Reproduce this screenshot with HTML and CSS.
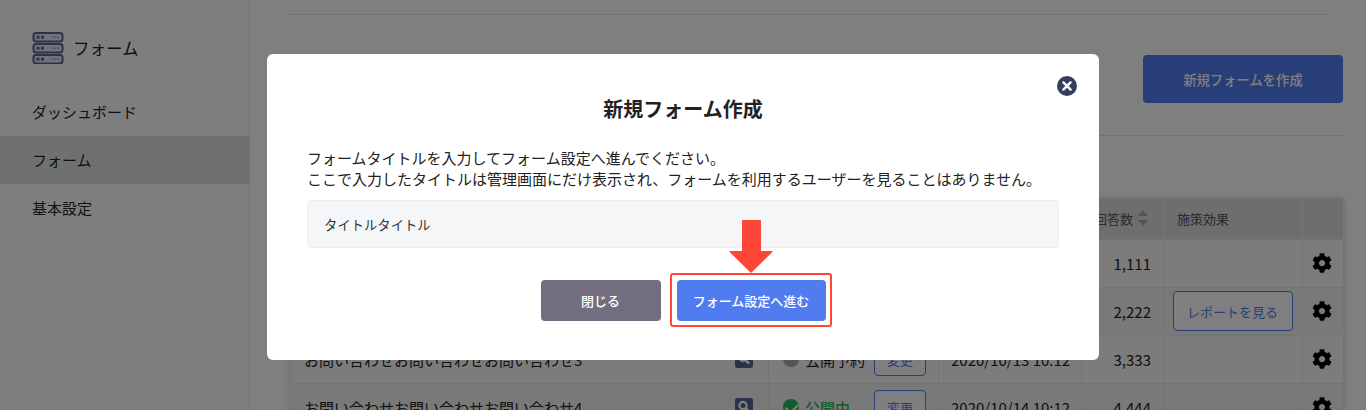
FILE: index.html
```html
<!DOCTYPE html>
<html lang="ja">
<head>
  <meta charset="UTF-8">
  <title>フォーム</title>
  <link rel="stylesheet" href="styles.css">
</head>
<body>
  <svg class="icon-defs" width="0" height="0">
    <symbol id="gear" viewBox="0 0 512 512"><path d="M487.4 315.7l-42.6-24.6c4.3-23.2 4.3-47 0-70.2l42.6-24.6c4.9-2.8 7.1-8.6 5.5-14-11.1-35.6-30-67.8-54.7-94.6-3.8-4.1-10-5.1-14.8-2.3L380.8 110c-17.9-15.4-38.5-27.3-60.8-35.1V25.8c0-5.6-3.9-10.5-9.4-11.7-36.7-8.2-74.3-7.8-109.2 0-5.5 1.2-9.4 6.1-9.4 11.7V75c-22.2 7.9-42.8 19.8-60.8 35.1L88.7 85.5c-4.9-2.8-11-1.9-14.8 2.3-24.7 26.7-43.6 58.9-54.7 94.6-1.7 5.4.6 11.2 5.5 14L67.3 221c-4.3 23.2-4.3 47 0 70.2l-42.6 24.6c-4.9 2.8-7.1 8.6-5.5 14 11.1 35.6 30 67.8 54.7 94.6 3.8 4.1 10 5.1 14.8 2.3l42.6-24.6c17.9 15.4 38.5 27.3 60.8 35.1v49.2c0 5.6 3.9 10.5 9.4 11.7 36.7 8.2 74.3 7.8 109.2 0 5.5-1.2 9.4-6.1 9.4-11.7v-49.2c22.2-7.9 42.8-19.8 60.8-35.1l42.6 24.6c4.9 2.8 11 1.9 14.8-2.3 24.7-26.7 43.6-58.9 54.7-94.6 1.5-5.5-.7-11.3-5.6-14.1zM256 336c-44.1 0-80-35.9-80-80s35.9-80 80-80 80 35.9 80 80-35.9 80-80 80z"/></symbol>
    <symbol id="search" viewBox="0 0 18 18"><rect width="18" height="18" rx="2" fill="#566695"/><circle cx="8" cy="7.5" r="3.6" fill="none" stroke="#fff" stroke-width="2.2"/><path d="M10.8 10.3l3.4 3.4" stroke="#fff" stroke-width="2.4"/></symbol>
  </svg>

  <div class="app">
    <aside class="sidebar">
      <div class="brand">
        <svg class="brand-icon" width="32" height="32" viewBox="0 0 32 32">
          <g fill="#e4e7ee" stroke="#566695" stroke-width="2">
            <rect x="1.5" y="1" width="29" height="8.4" rx="2.4"/>
            <rect x="1.5" y="12" width="29" height="8.4" rx="2.4"/>
            <rect x="1.5" y="23" width="29" height="8.4" rx="2.4"/>
          </g>
          <g fill="#566695">
            <rect x="4.5" y="3.7" width="3" height="3"/><rect x="9" y="3.7" width="3" height="3"/>
            <rect x="4.5" y="14.7" width="3" height="3"/><rect x="9" y="14.7" width="3" height="3"/>
            <rect x="4.5" y="25.7" width="3" height="3"/><rect x="9" y="25.7" width="3" height="3"/>
          </g>
          <g fill="#7f9cf0">
            <rect x="19" y="4.4" width="1.6" height="1.6"/><rect x="22" y="4.4" width="1.6" height="1.6"/><rect x="25" y="4.4" width="1.6" height="1.6"/>
            <rect x="19" y="15.4" width="1.6" height="1.6"/><rect x="22" y="15.4" width="1.6" height="1.6"/><rect x="25" y="15.4" width="1.6" height="1.6"/>
            <rect x="19" y="26.4" width="1.6" height="1.6"/><rect x="22" y="26.4" width="1.6" height="1.6"/><rect x="25" y="26.4" width="1.6" height="1.6"/>
          </g>
        </svg>
        <span>フォーム</span>
      </div>
      <nav class="side-nav">
        <a class="side-link">ダッシュボード</a>
        <a class="side-link active">フォーム</a>
        <a class="side-link">基本設定</a>
      </nav>
    </aside>

    <main class="content">
      <div class="top-rule"></div>
      <div class="page-head">
        <button class="create-btn">新規フォームを作成</button>
      </div>

      <table class="form-table">
        <colgroup>
          <col class="col-title"><col class="col-status"><col class="col-date">
          <col class="col-count"><col class="col-effect"><col class="col-gear">
        </colgroup>
        <thead>
          <tr>
            <th>タイトル</th><th>ステータス</th><th>更新日時</th>
            <th>
              <div class="sort-head">回答数
                <svg class="sort" width="10" height="16" viewBox="0 0 10 16"><path d="M5 0l5 6H0zM5 16L0 10h10z"/></svg>
              </div>
            </th>
            <th>施策効果</th><th></th>
          </tr>
        </thead>
        <tbody>
          <tr>
            <td><div class="title-cell">お問い合わせお問い合わせお問い合わせ1<svg class="search" width="18" height="18"><use href="#search"/></svg></div></td>
            <td><div class="status-cell"><span class="state on"><i class="dot on"></i>公開中</span><button class="change-btn">変更</button></div></td>
            <td class="date">2020/10/11 10:12</td><td class="num">1,111</td><td></td>
            <td class="gear-cell"><svg class="gear" width="20" height="20"><use href="#gear"/></svg></td>
          </tr>
          <tr>
            <td><div class="title-cell">お問い合わせお問い合わせお問い合わせ2<svg class="search" width="18" height="18"><use href="#search"/></svg></div></td>
            <td><div class="status-cell"><span class="state on"><i class="dot on"></i>公開中</span><button class="change-btn">変更</button></div></td>
            <td class="date">2020/10/12 10:12</td><td class="num">2,222</td>
            <td class="effect-cell"><button class="report-btn">レポートを見る</button></td>
            <td class="gear-cell"><svg class="gear" width="20" height="20"><use href="#gear"/></svg></td>
          </tr>
          <tr>
            <td><div class="title-cell">お問い合わせお問い合わせお問い合わせ3<svg class="search" width="18" height="18"><use href="#search"/></svg></div></td>
            <td><div class="status-cell"><span class="state"><i class="dot"></i>公開予約</span><button class="change-btn">変更</button></div></td>
            <td class="date">2020/10/13 10:12</td><td class="num">3,333</td><td></td>
            <td class="gear-cell"><svg class="gear" width="20" height="20"><use href="#gear"/></svg></td>
          </tr>
          <tr>
            <td><div class="title-cell">お問い合わせお問い合わせお問い合わせ4<svg class="search" width="18" height="18"><use href="#search"/></svg></div></td>
            <td><div class="status-cell"><span class="state on"><i class="dot on"></i>公開中</span><button class="change-btn">変更</button></div></td>
            <td class="date">2020/10/14 10:12</td><td class="num">4,444</td><td></td>
            <td class="gear-cell"><svg class="gear" width="20" height="20"><use href="#gear"/></svg></td>
          </tr>
        </tbody>
      </table>
    </main>
  </div>

  <!-- modal -->
  <div class="overlay">
    <div class="modal">
      <button class="modal-close" aria-label="閉じる">
        <svg width="20" height="20" viewBox="0 0 20 20">
          <circle cx="10" cy="10" r="10" fill="#343f5c"/>
          <path d="M6.4 6.4l7.2 7.2M13.6 6.4l-7.2 7.2" stroke="#fff" stroke-width="2.4" stroke-linecap="round"/>
        </svg>
      </button>
      <h2 class="modal-title">新規フォーム作成</h2>
      <p class="modal-text">フォームタイトルを入力してフォーム設定へ進んでください。<br>ここで入力したタイトルは管理画面にだけ表示され、フォームを利用するユーザーを見ることはありません。</p>
      <div class="modal-input">タイトルタイトル</div>
      <div class="modal-actions">
        <button class="btn btn-close">閉じる</button>
        <div class="next-wrap">
          <button class="btn btn-next">フォーム設定へ進む</button>
          <span class="next-frame"></span>
          <svg class="next-arrow" width="44" height="53" viewBox="0 0 44 53">
            <path d="M13 1a1 1 0 0 1 1-1h17a1 1 0 0 1 1 1v30h11a.6.6 0 0 1 .4 1L22 53 .6 32a.6.6 0 0 1 .4-1h12z" fill="#ff4438"/>
          </svg>
        </div>
      </div>
    </div>
  </div>
</body>
</html>
```

FILE: styles.css
```css
* {
  margin: 0;
  padding: 0;
  box-sizing: border-box;
}

html, body {
  height: 100%;
  overflow: hidden;
  background: #fff;
  color: #222;
  font-family: "Noto Sans CJK JP", "Noto Sans", sans-serif;
  font-size: 15px;
}

button {
  font-family: inherit;
  border: none;
  background: none;
}

.icon-defs {
  position: absolute;
}

.app {
  display: flex;
  height: 100%;
}

/* sidebar */
.sidebar {
  width: 250px;
  flex: none;
  background: #fdfdfd;
  border-right: 1px solid #e2e2e2;
}

.brand {
  display: flex;
  align-items: center;
  gap: 9px;
  height: 88px;
  padding: 7px 0 0 32px;
  font-size: 16.5px;
}

.side-link {
  display: block;
  height: 48px;
  padding-left: 32px;
  line-height: 48px;
}

.side-link.active {
  background: #dfe2e1;
}

/* main area */
.content {
  flex: 1;
  min-width: 0;
  padding: 0 23px 0 40px;
}

.top-rule {
  height: 15px;
  margin-right: 17px;
  border-bottom: 1px solid #e2e2e2;
}

.page-head {
  display: flex;
  justify-content: flex-end;
  margin-top: 40px;
  padding-bottom: 32px;
  border-bottom: 1px solid #e2e2e2;
}

.create-btn {
  width: 200px;
  height: 48px;
  border-radius: 4px;
  background: #507cf0;
  color: #fff;
  font-size: 13.33px;
  font-weight: 500;
}

.form-table {
  width: 100%;
  margin-top: 62px;
  table-layout: fixed;
  border-collapse: collapse;
  box-shadow: 0 0 6px rgba(0, 0, 0, .15);
}

.col-title { width: 478px; }
.col-status { width: 170px; }
.col-date { width: 143px; }
.col-count { width: 83px; }
.col-effect { width: 138px; }
.col-gear { width: 41px; }

.form-table th {
  height: 41px;
  padding: 0 12px;
  background: #dcdcdc;
  border-right: 1px solid #efefef;
  color: #555;
  font-size: 13px;
  font-weight: 400;
  text-align: left;
}

.form-table td {
  height: 48px;
  border: 1px solid #e8e8e8;
}

.form-table tbody tr:nth-child(odd) td {
  background: #f8f8f8;
}

.form-table tbody tr:nth-child(even) td {
  background: #f2f2f2;
}

.sort-head {
  display: flex;
  align-items: center;
  gap: 5px;
  white-space: nowrap;
}

.sort {
  flex: none;
  fill: #a8a8a8;
}

.title-cell {
  display: flex;
  align-items: center;
  justify-content: space-between;
  padding: 0 15px 0 13px;
}

.search {
  flex: none;
}

.status-cell {
  display: flex;
  align-items: center;
  justify-content: space-between;
  padding: 0 12px 0 14px;
}

.state {
  display: flex;
  align-items: center;
  gap: 6px;
}

.state.on {
  color: #2fb457;
  font-weight: 500;
}

.dot {
  position: relative;
  flex: none;
  width: 16px;
  height: 16px;
  border-radius: 50%;
  background: #aaa;
}

.dot.on {
  background: #2fb457;
}

.dot.on::after {
  content: "";
  position: absolute;
  left: 5px;
  top: 2px;
  width: 6px;
  height: 10px;
  border: solid #fff;
  border-width: 0 2px 2px 0;
  transform: rotate(45deg);
}

.change-btn {
  width: 52px;
  height: 34px;
  border: 1px solid #507cf0;
  border-radius: 4px;
  background: #fff;
  color: #507cf0;
  font-size: 13px;
}

.date {
  padding-left: 12px;
  white-space: nowrap;
}

.num {
  padding-right: 13px;
  text-align: right;
}

.effect-cell {
  padding-right: 2px;
  text-align: center;
}

.report-btn {
  width: 120px;
  height: 40px;
  border: 1px solid #507cf0;
  border-radius: 4px;
  background: #fff;
  color: #507cf0;
  font-size: 13px;
}

.gear-cell {
  padding-right: 3px;
  text-align: center;
  line-height: 0;
}

.gear {
  fill: #000;
}

/* modal */
.overlay {
  position: fixed;
  inset: 0;
  display: flex;
  justify-content: center;
  align-items: flex-start;
  padding-top: 54px;
  background: rgba(0, 0, 0, .5);
}

.modal {
  position: relative;
  width: 832px;
  height: 306px;
  padding: 41px 40px 0;
  border-radius: 6px;
  background: #fff;
}

.modal-close {
  position: absolute;
  top: 22px;
  right: 22px;
  width: 20px;
  height: 20px;
  line-height: 0;
}

.modal-title {
  font-size: 20px;
  line-height: 28px;
  font-weight: 700;
  text-align: center;
}

.modal-text {
  margin-top: 24px;
  line-height: 21px;
}

.modal-input {
  height: 48px;
  margin-top: 11px;
  padding-left: 16px;
  line-height: 47px;
  border: 1px solid #eceef0;
  border-radius: 4px;
  background: #f5f6f8;
  color: #333;
  font-size: 13.33px;
}

.modal-actions {
  display: flex;
  justify-content: center;
  gap: 16px;
  margin-top: 32px;
}

.next-wrap {
  position: relative;
}

.btn {
  display: block;
  height: 41px;
  border-radius: 4px;
  color: #fff;
  font-size: 13px;
  font-weight: 500;
}

.btn-close {
  width: 120px;
  background: #726e80;
}

.btn-next {
  width: 149px;
  background: #507cf0;
}

.next-frame {
  position: absolute;
  inset: -7px -6px -6px -7px;
  border: 2px solid #ff4438;
  border-radius: 3px;
}

.next-arrow {
  position: absolute;
  top: -60px;
  left: 52px;
}
```
